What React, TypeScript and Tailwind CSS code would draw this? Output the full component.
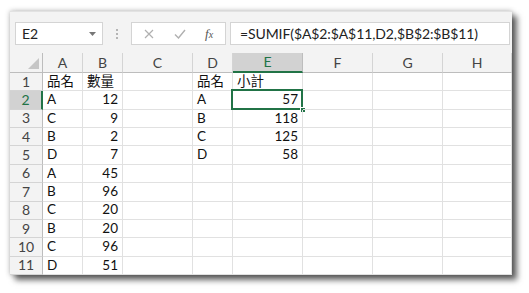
import React from "react";

const cols = ["A", "B", "C", "D", "E", "F", "G", "H"];
const ab: [string, string][] = [
  ["A", "12"], ["C", "9"], ["B", "2"], ["D", "7"], ["A", "45"],
  ["B", "96"], ["C", "20"], ["B", "20"], ["C", "96"], ["D", "51"],
];
const de: [string, string][] = [["A", "57"], ["B", "118"], ["C", "125"], ["D", "58"]];

const font = { fontFamily: 'Lato, "Noto Sans CJK TC", sans-serif' };

function cellValue(r: number, c: number): { v: string; right?: boolean } {
  if (r === 0) {
    const h = ["品名", "數量", "", "品名", "小計", "", "", ""];
    return { v: h[c] };
  }
  const i = r - 1;
  if (c === 0) return { v: ab[i][0] };
  if (c === 1) return { v: ab[i][1], right: true };
  if (c === 3 && de[i]) return { v: de[i][0] };
  if (c === 4 && de[i]) return { v: de[i][1], right: true };
  return { v: "" };
}

export default function App() {
  return (
    <div className="w-[529px] h-[293px] bg-white pt-[11px] pl-[10px]" style={font}>
      <div className="w-[502px] h-[264px] bg-[#f3f3f3] border-t border-[#e2e2e2] shadow-[0_0_5px_rgba(0,0,0,0.3),5px_5px_6px_rgba(0,0,0,0.6)] flex flex-col overflow-hidden">
        {/* formula bar */}
        <div className="h-[40px] flex items-start pt-[10px] shrink-0">
          <div className="ml-[5px] w-[88px] h-[23px] bg-white border border-[#d4d4d4] flex items-center justify-between pl-[6px] pr-[6px]">
            <span className="text-[14px] text-[#222] leading-none">E2</span>
            <svg width="7" height="4" viewBox="0 0 7 4"><path d="M0 0h7L3.5 4z" fill="#777" /></svg>
          </div>
          <div className="w-[28px] h-[23px] flex flex-col items-center justify-center gap-[2px]">
            <span className="w-[2px] h-[2px] bg-[#b5b5b5]" />
            <span className="w-[2px] h-[2px] bg-[#b5b5b5]" />
            <span className="w-[2px] h-[2px] bg-[#b5b5b5]" />
          </div>
          <div className="w-[95px] h-[23px] bg-white border border-[#d4d4d4] flex items-center">
            <svg className="ml-[12px]" width="10" height="10" viewBox="0 0 10 10"><path d="M1 1l8 8M9 1l-8 8" stroke="#b0b0b0" strokeWidth="1.2" /></svg>
            <svg className="ml-[20px]" width="12" height="10" viewBox="0 0 12 10"><path d="M1 5.5l3.5 3.5L11 1" stroke="#b0b0b0" strokeWidth="1.4" fill="none" /></svg>
            <span className="ml-[19px] text-[13px] italic text-[#555] leading-none" style={{ fontFamily: '"Liberation Serif", serif' }}>f<span className="text-[10px]">x</span></span>
          </div>
          <div className="ml-[4px] flex-1 h-[23px] bg-white border border-[#d4d4d4] mr-[2px] flex items-center pl-[9px]">
            <span className="text-[14px] text-[#222] leading-none tracking-[-0.1px]">=SUMIF($A$2:$A$11,D2,$B$2:$B$11)</span>
          </div>
        </div>
        {/* grid */}
        <div className="mt-[1px] grid grid-cols-[33px_40px_40px_70px_40px_70px_70px_70px_69px] grid-rows-[20px_repeat(11,minmax(0,1fr))] h-[223px] bg-white">
          <div className="bg-[#f3f3f3] border-r border-b border-[#bdbdbd] relative">
            <svg className="absolute right-[3px] bottom-[3px]" width="11" height="11" viewBox="0 0 11 11"><path d="M11 0v11H0z" fill="#c6c6c6" /></svg>
          </div>
          {cols.map((c) => (
            <div
              key={c}
              className={
                c === "E"
                  ? "bg-[#d2d2d2] border-r border-[#bdbdbd] border-b-2 border-b-[#217346] text-[#217346] flex items-center justify-center text-[14px] leading-none"
                  : "bg-[#f3f3f3] border-r border-[#d4d4d4] border-b border-b-[#bdbdbd] text-[#444] flex items-center justify-center text-[14px] leading-none"
              }
            >
              {c}
            </div>
          ))}
          {Array.from({ length: 11 }).map((_, r) => (
            <React.Fragment key={r}>
              <div
                className={
                  r === 1
                    ? "bg-[#d2d2d2] border-r-2 border-[#217346] border-b border-b-[#d4d4d4] text-[#217346] flex items-center justify-center text-[14px] leading-none"
                    : "bg-[#f3f3f3] border-r border-[#bdbdbd] border-b border-b-[#d4d4d4] text-[#444] flex items-center justify-center text-[14px] leading-none"
                }
              >
                {r + 1}
              </div>
              {cols.map((c, ci) => {
                const { v, right } = cellValue(r, ci);
                const sel = r === 1 && c === "E";
                return (
                  <div
                    key={c}
                    className={
                      "relative border-r border-b border-[#e1e1e1] flex items-center px-[4px] text-[13.5px] text-[#111] leading-none whitespace-nowrap " +
                      (right ? "justify-end" : "justify-start")
                    }
                  >
                    {v}
                    {sel && (
                      <>
                        <div className="absolute -left-[2px] -top-[2px] -right-[1px] -bottom-[1px] border-2 border-[#217346]" />
                        <div className="absolute -right-[4px] -bottom-[4px] w-[6px] h-[6px] bg-[#217346] border border-white" />
                      </>
                    )}
                  </div>
                );
              })}
            </React.Fragment>
          ))}
        </div>
      </div>
    </div>
  );
}
